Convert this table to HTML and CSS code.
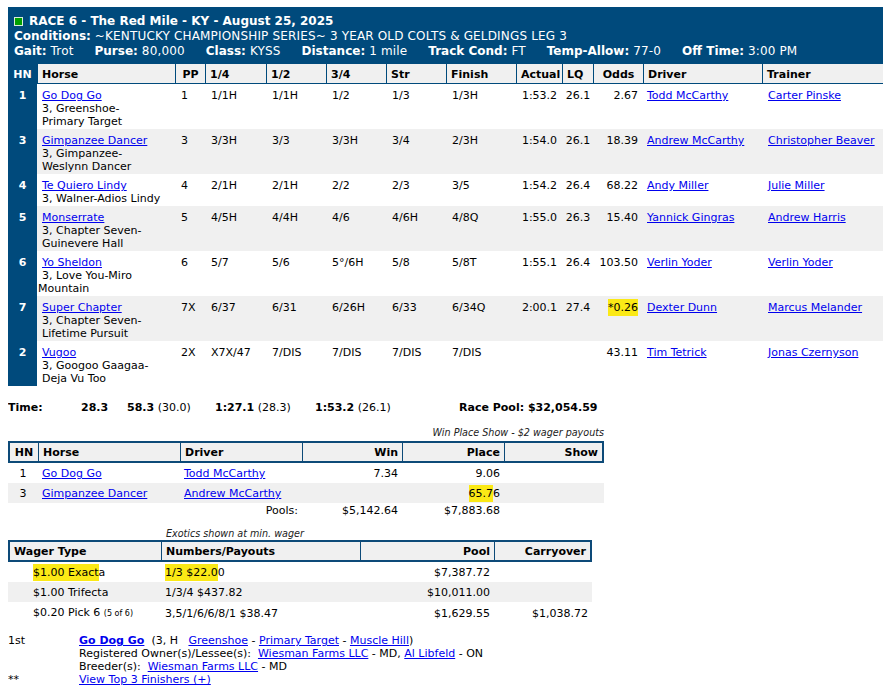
FILE: index.html
```html
<!DOCTYPE html>
<html lang="en">
<head>
<meta charset="utf-8">
<title>Race 6 - The Red Mile</title>
<link rel="stylesheet" href="styles.css">
</head>
<body>
<table class="race">
  <colgroup>
    <col class="w-hn"><col class="w-horse"><col class="w-pp"><col class="w-q1"><col class="w-q2"><col class="w-q3"><col class="w-str"><col class="w-fin"><col class="w-act"><col class="w-lq"><col class="w-odds"><col class="w-drv"><col class="w-trn">
  </colgroup>
  <thead>
    <tr>
      <td colspan="13" class="race-head">
        <div class="title"><span class="flag"></span>RACE 6 - The Red Mile - KY - August 25, 2025</div>
        <div><b>Conditions:</b> ~KENTUCKY CHAMPIONSHIP SERIES~ 3 YEAR OLD COLTS &amp; GELDINGS LEG 3</div>
        <div class="facts">
          <span><b>Gait:</b> Trot</span>
          <span><b>Purse:</b> 80,000</span>
          <span><b>Class:</b> KYSS</span>
          <span><b>Distance:</b> 1 mile</span>
          <span><b>Track Cond:</b> FT</span>
          <span><b>Temp-Allow:</b> 77-0</span>
          <span><b>Off Time:</b> 3:00 PM</span>
        </div>
      </td>
    </tr>
    <tr class="cols">
      <th class="hn">HN</th><th>Horse</th><th class="ctr">PP</th><th>1/4</th><th>1/2</th><th>3/4</th><th>Str</th><th>Finish</th><th>Actual</th><th>LQ</th><th class="ctr">Odds</th><th>Driver</th><th>Trainer</th>
    </tr>
  </thead>
  <tbody>
    <tr>
      <td class="hn">1</td>
      <td class="horse"><a href="#">Go Dog Go</a><br>3, Greenshoe-<br>Primary Target</td>
      <td>1</td><td>1/1H</td><td>1/1H</td><td>1/2</td><td>1/3</td><td class="fin">1/3H</td>
      <td class="ctr">1:53.2</td><td class="ctr">26.1</td><td class="odds">2.67</td>
      <td class="drv"><a href="#">Todd McCarthy</a></td><td><a href="#">Carter Pinske</a></td>
    </tr>
    <tr class="alt">
      <td class="hn">3</td>
      <td class="horse"><a href="#">Gimpanzee Dancer</a><br>3, Gimpanzee-<br>Weslynn Dancer</td>
      <td>3</td><td>3/3H</td><td>3/3</td><td>3/3H</td><td>3/4</td><td class="fin">2/3H</td>
      <td class="ctr">1:54.0</td><td class="ctr">26.1</td><td class="odds">18.39</td>
      <td class="drv"><a href="#">Andrew McCarthy</a></td><td><a href="#">Christopher Beaver</a></td>
    </tr>
    <tr>
      <td class="hn">4</td>
      <td class="horse"><a href="#">Te Quiero Lindy</a><br>3, Walner-Adios Lindy</td>
      <td>4</td><td>2/1H</td><td>2/1H</td><td>2/2</td><td>2/3</td><td class="fin">3/5</td>
      <td class="ctr">1:54.2</td><td class="ctr">26.4</td><td class="odds">68.22</td>
      <td class="drv"><a href="#">Andy Miller</a></td><td><a href="#">Julie Miller</a></td>
    </tr>
    <tr class="alt">
      <td class="hn">5</td>
      <td class="horse"><a href="#">Monserrate</a><br>3, Chapter Seven-<br>Guinevere Hall</td>
      <td>5</td><td>4/5H</td><td>4/4H</td><td>4/6</td><td>4/6H</td><td class="fin">4/8Q</td>
      <td class="ctr">1:55.0</td><td class="ctr">26.3</td><td class="odds">15.40</td>
      <td class="drv"><a href="#">Yannick Gingras</a></td><td><a href="#">Andrew Harris</a></td>
    </tr>
    <tr>
      <td class="hn">6</td>
      <td class="horse"><a href="#">Yo Sheldon</a><br>3, Love You-Miro<br><span class="outdent">Mountain</span></td>
      <td>6</td><td>5/7</td><td>5/6</td><td>5°/6H</td><td>5/8</td><td class="fin">5/8T</td>
      <td class="ctr">1:55.1</td><td class="ctr">26.4</td><td class="odds">103.50</td>
      <td class="drv"><a href="#">Verlin Yoder</a></td><td><a href="#">Verlin Yoder</a></td>
    </tr>
    <tr class="alt">
      <td class="hn">7</td>
      <td class="horse"><a href="#">Super Chapter</a><br>3, Chapter Seven-<br>Lifetime Pursuit</td>
      <td>7X</td><td>6/37</td><td>6/31</td><td>6/26H</td><td>6/33</td><td class="fin">6/34Q</td>
      <td class="ctr">2:00.1</td><td class="ctr">27.4</td><td class="odds"><span class="hl">*0.26</span></td>
      <td class="drv"><a href="#">Dexter Dunn</a></td><td><a href="#">Marcus Melander</a></td>
    </tr>
    <tr>
      <td class="hn">2</td>
      <td class="horse"><a href="#">Vugoo</a><br>3, Googoo Gaagaa-<br>Deja Vu Too</td>
      <td>2X</td><td>X7X/47</td><td>7/DIS</td><td>7/DIS</td><td>7/DIS</td><td class="fin">7/DIS</td>
      <td class="ctr"></td><td class="ctr"></td><td class="odds">43.11</td>
      <td class="drv"><a href="#">Tim Tetrick</a></td><td><a href="#">Jonas Czernyson</a></td>
    </tr>
  </tbody>
</table>

<div class="times">
  <b>Time:</b>
  <b>28.3</b>
  <span><b>58.3</b> (30.0)</span>
  <span><b>1:27.1</b> (28.3)</span>
  <span><b>1:53.2</b> (26.1)</span>
  <b>Race Pool: $32,054.59</b>
</div>

<div class="note wps-note">Win Place Show - $2 wager payouts</div>
<table class="wps">
  <colgroup>
    <col class="x-hn"><col class="x-horse"><col class="x-drv"><col class="x-win"><col class="x-place"><col class="x-show">
  </colgroup>
  <thead>
    <tr><th class="ctr">HN</th><th>Horse</th><th>Driver</th><th class="num">Win</th><th class="num">Place</th><th class="num">Show</th></tr>
  </thead>
  <tbody>
    <tr><td class="ctr">1</td><td><a href="#">Go Dog Go</a></td><td><a href="#">Todd McCarthy</a></td><td class="num">7.34</td><td class="num">9.06</td><td class="num"></td></tr>
    <tr class="alt"><td class="ctr">3</td><td><a href="#">Gimpanzee Dancer</a></td><td><a href="#">Andrew McCarthy</a></td><td class="num"></td><td class="num"><span class="hl">65.7</span>6</td><td class="num"></td></tr>
    <tr class="pools"><td></td><td></td><td class="num">Pools:</td><td class="num">$5,142.64</td><td class="num">$7,883.68</td><td></td></tr>
  </tbody>
</table>

<div class="note exo-note">Exotics shown at min. wager</div>
<table class="exo">
  <colgroup>
    <col class="e-type"><col class="e-num"><col class="e-pool"><col class="e-carry">
  </colgroup>
  <thead>
    <tr><th>Wager Type</th><th>Numbers/Payouts</th><th class="num">Pool</th><th class="num">Carryover</th></tr>
  </thead>
  <tbody>
    <tr><td class="wtype"><span class="hl">$1.00 Exact</span>a</td><td><span class="hl">1/3 $22.0</span>0</td><td class="num">$7,387.72</td><td class="num"></td></tr>
    <tr class="alt"><td class="wtype">$1.00 Trifecta</td><td>1/3/4 $437.82</td><td class="num">$10,011.00</td><td class="num"></td></tr>
    <tr><td class="wtype">$0.20 Pick 6 <small>(5 of 6)</small></td><td>3,5/1/6/6/8/1 $38.47</td><td class="num">$1,629.55</td><td class="num">$1,038.72</td></tr>
  </tbody>
</table>

<table class="info">
  <tbody>
    <tr><td class="lbl">1st</td><td><a href="#" class="strong">Go Dog Go</a>&nbsp; (3, H &nbsp; <a href="#">Greenshoe</a> - <a href="#">Primary Target</a> - <a href="#">Muscle Hill</a>)<br>Registered Owner(s)/Lessee(s): &nbsp;<a href="#">Wiesman Farms LLC</a> - MD, <a href="#">Al Libfeld</a> - ON<br>Breeder(s): &nbsp;<a href="#">Wiesman Farms LLC</a> - MD</td></tr>
    <tr><td class="lbl">**</td><td><a href="#">View Top 3 Finishers (+)</a></td></tr>
  </tbody>
</table>
</body>
</html>
```

FILE: styles.css
```css
body {
  margin: 7px 3px 0 8px;
  font-family: "DejaVu Sans", Verdana, sans-serif;
  font-size: 11px;
  line-height: 13px;
  color: #000;
  background: #fff;
}
a { color: #0000ee; }
a.strong { font-weight: bold; }

table {
  border-collapse: separate;
  border-spacing: 0;
  table-layout: fixed;
  font-size: 11px;
  line-height: 13px;
}

/* ---------- main race table ---------- */
.race { width: 875px; }
.w-hn { width: 29px; }
.w-horse { width: 138px; }
.w-pp { width: 30px; }
.w-q1 { width: 61px; }
.w-q2 { width: 60px; }
.w-q3 { width: 60px; }
.w-str { width: 60px; }
.w-fin { width: 70px; }
.w-act { width: 46px; }
.w-lq { width: 31px; }
.w-odds { width: 50px; }
.w-drv { width: 119px; }
.w-trn { width: 121px; }

.race-head {
  background: #004a7c;
  color: #fff;
  font-size: 12px;
  line-height: 15px;
  padding: 7px 6px 5px;
  letter-spacing: 0.16px;
}
.race-head b, .title { letter-spacing: 0; }
.title { font-weight: bold; }
.flag {
  display: inline-block;
  width: 7px;
  height: 7px;
  background: #00a000;
  border: 1px solid #d8ecd8;
  margin-right: 6px;
  vertical-align: -1px;
}
.facts { display: flex; gap: 21px; }

.cols th {
  background: #f0f0f0;
  border-left: 1px solid #004a7c;
  border-bottom: 1px solid #004a7c;
  padding: 4px 4px 2px;
  text-align: left;
  font-weight: bold;
  white-space: nowrap;
  overflow: hidden;
}
.cols th.hn { background: #004a7c; color: #fff; text-align: center; border-left: 0; padding-left: 0; padding-right: 0; }
.cols th.ctr { text-align: center; padding-left: 0; padding-right: 0; }

.race tbody td {
  border-left: 1px solid transparent;
  padding: 5px 4px 1px 5px;
  vertical-align: top;
  white-space: nowrap;
}
.race tbody td.horse { padding-left: 4px; white-space: normal; }
.race tbody td.drv { padding-left: 3px; }
.race tbody td.hn {
  background: #004a7c;
  color: #fff;
  font-weight: bold;
  text-align: center;
  border-left: 0;
  padding-left: 0;
  padding-right: 0;
}
.race tbody td.ctr { text-align: center; padding-left: 0; padding-right: 0; }
.race tbody td.odds { text-align: right; padding-right: 5px; }
.race tbody tr.alt td:not(.hn) { background: #f0f0f0; }
.outdent { margin-left: -4px; }

.hl { background: #fbe916; padding: 2px 0 2px; }

/* ---------- times ---------- */
.times {
  margin-top: 15px;
  display: grid;
  grid-template-columns: 73px 46px 88px 100px 144px auto;
  line-height: 13px;
}

/* ---------- notes ---------- */
.note {
  font-style: italic;
  font-size: 9.6px;
  line-height: 12px;
  color: #222;
}
.wps-note { width: 596px; text-align: right; margin-top: 13px; }
.exo-note { margin-top: 10px; padding-left: 158px; }

/* ---------- wps / exotics ---------- */
.wps { width: 596px; margin-top: 2px; }
.x-hn { width: 30px; }
.x-horse { width: 142px; }
.x-drv { width: 122px; }
.x-win { width: 100px; }
.x-place { width: 102px; }
.x-show { width: 100px; }

.exo { width: 584px; }
.e-type { width: 153px; }
.e-num { width: 199px; }
.e-pool { width: 134px; }
.e-carry { width: 98px; }

.wps th, .exo th {
  background: #f0f0f0;
  border-top: 2px solid #0d4a78;
  border-bottom: 2px solid #0d4a78;
  border-left: 1px solid #0d4a78;
  padding: 3px 4px 2px 4px;
  text-align: left;
  font-weight: bold;
  white-space: nowrap;
}
.wps th:first-child, .exo th:first-child { border-left: 2px solid #0d4a78; }
.wps th:last-child, .exo th:last-child { border-right: 2px solid #0d4a78; }

.wps td, .exo td {
  padding: 4px 4px 3px 4px;
  white-space: nowrap;
}
.wps tr.pools td { padding-top: 1px; padding-bottom: 1px; }
.wps tr.alt td, .exo tr.alt td { background: #f0f0f0; }
.wps .ctr { text-align: center; padding-left: 0; padding-right: 0; }
.wps .num, .exo .num { text-align: right; }
.exo td.wtype { padding-left: 25px; }
.exo small { font-size: 8px; }

/* ---------- info ---------- */
.info { margin-top: 11px; }
.info td { padding: 0; vertical-align: top; }
.info td.lbl { width: 71px; }
```
